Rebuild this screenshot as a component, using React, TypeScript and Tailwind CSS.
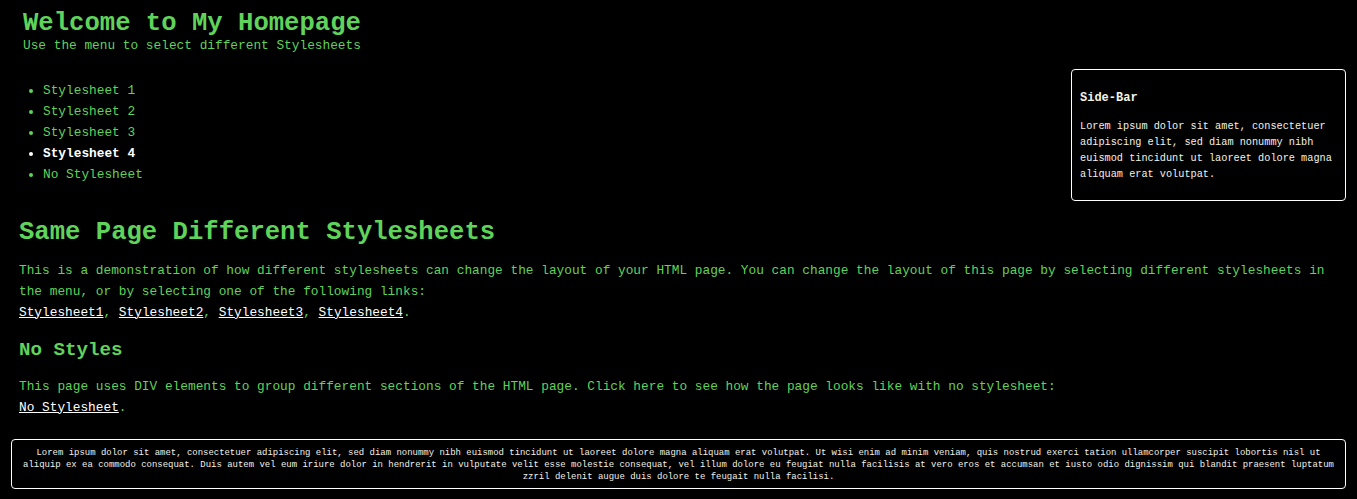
const green = 'text-[#5fd35a]';

const menu = ['Stylesheet 1', 'Stylesheet 2', 'Stylesheet 3', 'Stylesheet 4', 'No Stylesheet'];

export default function App() {
  return (
    <div
      className={`min-h-[499px] bg-black ${green} text-[12.8px]`}
      style={{ fontFamily: '"Liberation Mono", "Courier New", monospace' }}
    >
      {/* Header */}
      <div className="pl-[23px] pt-[10px]">
        <h1 className="text-[25.6px] font-bold leading-[28px]">Welcome to My Homepage</h1>
        <p className="leading-[16px]">Use the menu to select different Stylesheets</p>
      </div>

      {/* Menu + side bar */}
      <div className="flex items-start justify-between">
        <ul className="mt-[26px] list-disc pl-[43px] leading-[21px]">
          {menu.map((item) => (
            <li key={item} className={item === 'Stylesheet 4' ? 'font-bold text-white' : ''}>
              {item}
            </li>
          ))}
        </ul>

        <div className="mr-[11px] mt-[15px] w-[275px] rounded-[4px] border border-white px-[8px] pb-[18px] text-[10.24px] text-[#f2f2e8]">
          <h3 className="mt-[20px] text-[12px] font-bold leading-[16px]">Side-Bar</h3>
          <p className="mt-[12px] leading-[16px]">
            Lorem ipsum dolor sit amet, consectetuer adipiscing elit, sed diam nonummy nibh euismod
            tincidunt ut laoreet dolore magna aliquam erat volutpat.
          </p>
        </div>
      </div>

      {/* Main content */}
      <div className="px-[19px]">
        <h1 className="mt-[17px] text-[25.6px] font-bold leading-[30px]">Same Page Different Stylesheets</h1>
        <p className="mt-[11.5px] leading-[21px]">
          This is a demonstration of how different stylesheets can change the layout of your HTML
          page. You can change the layout of this page by selecting different stylesheets in the
          menu, or by selecting one of the following links:
          <br />
          <a className="text-white underline">Stylesheet1</a>,{' '}
          <a className="text-white underline">Stylesheet2</a>,{' '}
          <a className="text-white underline">Stylesheet3</a>,{' '}
          <a className="text-white underline">Stylesheet4</a>.
        </p>

        <h2 className="mt-[15.5px] text-[19.2px] font-bold leading-[24px]">No Styles</h2>
        <p className="mt-[13.5px] leading-[21px]">
          This page uses DIV elements to group different sections of the HTML page. Click here to
          see how the page looks like with no stylesheet:
          <br />
          <a className="text-white underline">No Stylesheet</a>.
        </p>
      </div>

      {/* Footer */}
      <div className="mx-[11px] mt-[21.5px] rounded-[4px] border border-white px-[8px] pb-[5px] pt-[7px] text-center text-[8.96px] leading-[12px] text-[#f2f2e8]">
        Lorem ipsum dolor sit amet, consectetuer adipiscing elit, sed diam nonummy nibh euismod
        tincidunt ut laoreet dolore magna aliquam erat volutpat. Ut wisi enim ad minim veniam, quis
        nostrud exerci tation ullamcorper suscipit lobortis nisl ut aliquip ex ea commodo consequat.
        Duis autem vel eum iriure dolor in hendrerit in vulputate velit esse molestie consequat, vel
        illum dolore eu feugiat nulla facilisis at vero eros et accumsan et iusto odio dignissim qui
        blandit praesent luptatum zzril delenit augue duis dolore te feugait nulla facilisi.
      </div>
    </div>
  );
}
